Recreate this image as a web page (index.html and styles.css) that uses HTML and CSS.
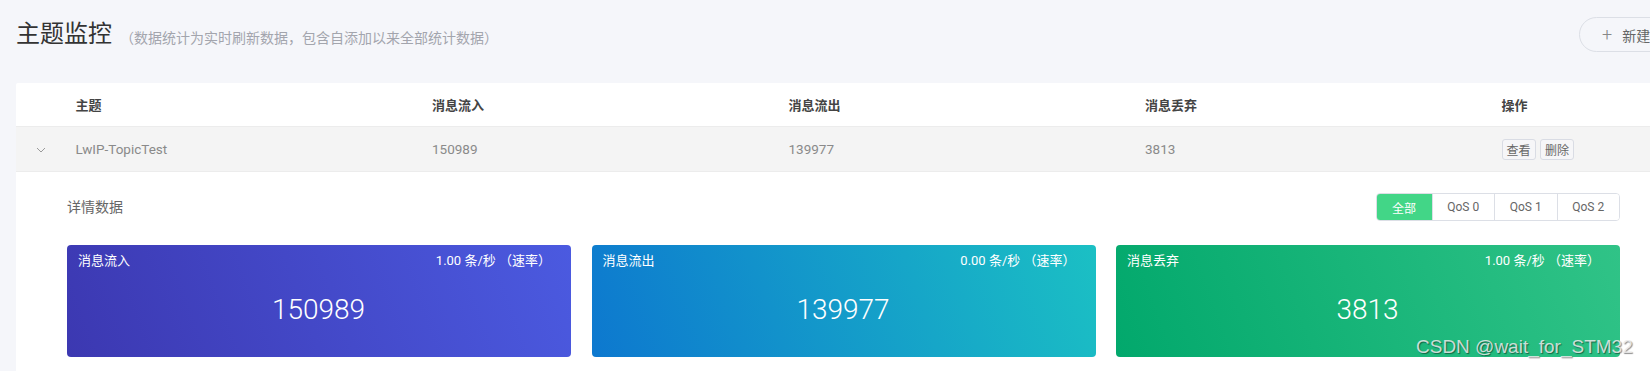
FILE: index.html
```html
<!DOCTYPE html>
<html lang="zh-CN">
<head>
<meta charset="UTF-8" />
<meta name="viewport" content="width=device-width, initial-scale=1" />
<title>主题监控</title>
<link rel="stylesheet" href="styles.css">
</head>
<body>

<div class="page">
  <div class="page-header">
    <h1>主题监控</h1>
    <span class="subtitle">（数据统计为实时刷新数据，包含自添加以来全部统计数据）</span>
    <button class="btn-new"><span class="plus">+</span>新建主题</button>
  </div>

  <div class="panel">
    <table class="topics">
      <colgroup>
        <col class="col-expand">
        <col class="col-data">
        <col class="col-data">
        <col class="col-data">
        <col class="col-data">
        <col>
      </colgroup>
      <thead>
        <tr>
          <th></th>
          <th>主题</th>
          <th>消息流入</th>
          <th>消息流出</th>
          <th>消息丢弃</th>
          <th>操作</th>
        </tr>
      </thead>
      <tbody>
        <tr class="row-open">
          <td class="expand">
            <svg width="10" height="6" viewBox="0 0 10 6"><polyline points="1,1 5,5 9,1" fill="none" stroke="#9a9a9a" stroke-width="1"/></svg>
          </td>
          <td>LwIP-TopicTest</td>
          <td>150989</td>
          <td>139977</td>
          <td>3813</td>
          <td>
            <button class="btn-mini">查看</button>
            <button class="btn-mini">删除</button>
          </td>
        </tr>
        <tr class="row-detail">
          <td colspan="6">
            <div class="detail">
              <div class="detail-head">
                <span class="detail-title">详情数据</span>
                <div class="segment">
                  <button class="active">全部</button>
                  <button>QoS 0</button>
                  <button>QoS 1</button>
                  <button>QoS 2</button>
                </div>
              </div>
              <div class="stats">
                <div class="stat stat-in">
                  <div class="stat-head"><span>消息流入</span><span>1.00 条/秒 （速率）</span></div>
                  <div class="stat-value">150989</div>
                </div>
                <div class="stat stat-out">
                  <div class="stat-head"><span>消息流出</span><span>0.00 条/秒 （速率）</span></div>
                  <div class="stat-value">139977</div>
                </div>
                <div class="stat stat-drop">
                  <div class="stat-head"><span>消息丢弃</span><span>1.00 条/秒 （速率）</span></div>
                  <div class="stat-value">3813</div>
                </div>
              </div>
            </div>
          </td>
        </tr>
      </tbody>
    </table>
  </div>
</div>

<div class="watermark">CSDN @wait_for_STM32</div>

</body>
</html>
```

FILE: styles.css
```css
html, body {
  overflow: hidden;
}
body {
  margin: 0;
  background: #f5f6fa;
  font-family: Roboto, "Noto Sans CJK SC", sans-serif;
  color: #333;
}
.page {
  width: 1700px;
  padding-left: 16px;
}
.page-header {
  display: flex;
  align-items: center;
  height: 35px;
  padding-top: 17px;
  margin-bottom: 31px;
}
.page-header h1 {
  margin: 0;
  font-size: 24px;
  font-weight: 400;
  color: #333;
  line-height: 35px;
}
.subtitle {
  margin-left: 8px;
  margin-top: 5px;
  font-size: 14px;
  color: #a3a5ad;
}
.btn-new {
  margin-left: auto;
  width: 137px;
  height: 35px;
  padding: 0 0 0 22px;
  display: flex;
  align-items: center;
  border: 1px solid #dcdfe6;
  border-radius: 18px;
  background: transparent;
  font-family: inherit;
  font-size: 14px;
  color: #666;
}
.plus {
  font-size: 18px;
  font-weight: 300;
  color: #888;
  margin-right: 10px;
}
.panel {
  background: white;
  border-radius: 2px;
}
.topics {
  width: 100%;
  border-collapse: collapse;
  table-layout: fixed;
}
.col-expand {
  width: 47.5px;
}
.col-data {
  width: 356.5px;
}
.topics th {
  height: 43px;
  padding: 0 12px;
  text-align: left;
  font-size: 13px;
  font-weight: 700;
  color: #444;
}
.topics td {
  padding: 0 12px;
  font-size: 13.5px;
  color: #8a8a8a;
}
.row-open td {
  height: 44px;
  background: #f4f4f4;
  border-top: 1px solid #ececec;
  border-bottom: 1px solid #ececec;
}
.row-open .expand {
  padding: 0;
}
.row-open .expand svg {
  display: block;
  margin: 2px 0 0 20px;
}
.btn-mini {
  height: 21px;
  padding: 0 4px;
  margin-right: 1px;
  border: 1px solid #d9dce4;
  border-radius: 3px;
  background: #f6f6f8;
  font-family: inherit;
  font-size: 12px;
  color: #666;
}
.row-detail td {
  padding: 0 0 0 51px;
}
.detail {
  width: 1553px;
  padding-top: 21px;
  padding-bottom: 40px;
}
.detail-head {
  display: flex;
  justify-content: space-between;
  align-items: center;
}
.detail-title {
  font-size: 14px;
  color: #666;
  margin-top: -2px;
}
.segment {
  display: flex;
  height: 28px;
  border: 1px solid #dcdfe6;
  border-radius: 4px;
  overflow: hidden;
  box-sizing: border-box;
}
.segment button {
  width: 62.5px;
  padding: 0;
  border: none;
  border-left: 1px solid #dcdfe6;
  background: white;
  font-family: inherit;
  font-size: 12px;
  color: #666;
}
.segment button:first-child {
  border-left: none;
  width: 55px;
}
.segment .active {
  background: #42d687;
  color: white;
}
.stats {
  display: grid;
  grid-template-columns: repeat(3, 1fr);
  gap: 20.5px;
  margin-top: 24px;
}
.stat {
  height: 112px;
  border-radius: 4px;
  color: white;
  box-sizing: border-box;
  padding: 6px 20px 0 11px;
}
.stat-in {
  background: linear-gradient(70deg, #3c38b1, #4b5ae0);
}
.stat-out {
  background: linear-gradient(70deg, #0d78cf, #1bc0c4);
}
.stat-drop {
  background: linear-gradient(70deg, #02a86c, #30c387);
}
.stat-head {
  display: flex;
  justify-content: space-between;
  font-size: 13px;
  line-height: 20px;
}
.stat-value {
  margin-top: 19px;
  padding-left: 8px;
  text-align: center;
  font-size: 28px;
  font-weight: 300;
  line-height: 40px;
}
.watermark {
  position: absolute;
  left: 1416px;
  top: 336px;
  font-family: "Liberation Sans", Arial, sans-serif;
  font-size: 19px;
  color: rgba(235, 235, 235, 0.85);
  text-shadow: 1px 1px 1px rgba(0, 0, 0, 0.45);
}
```
